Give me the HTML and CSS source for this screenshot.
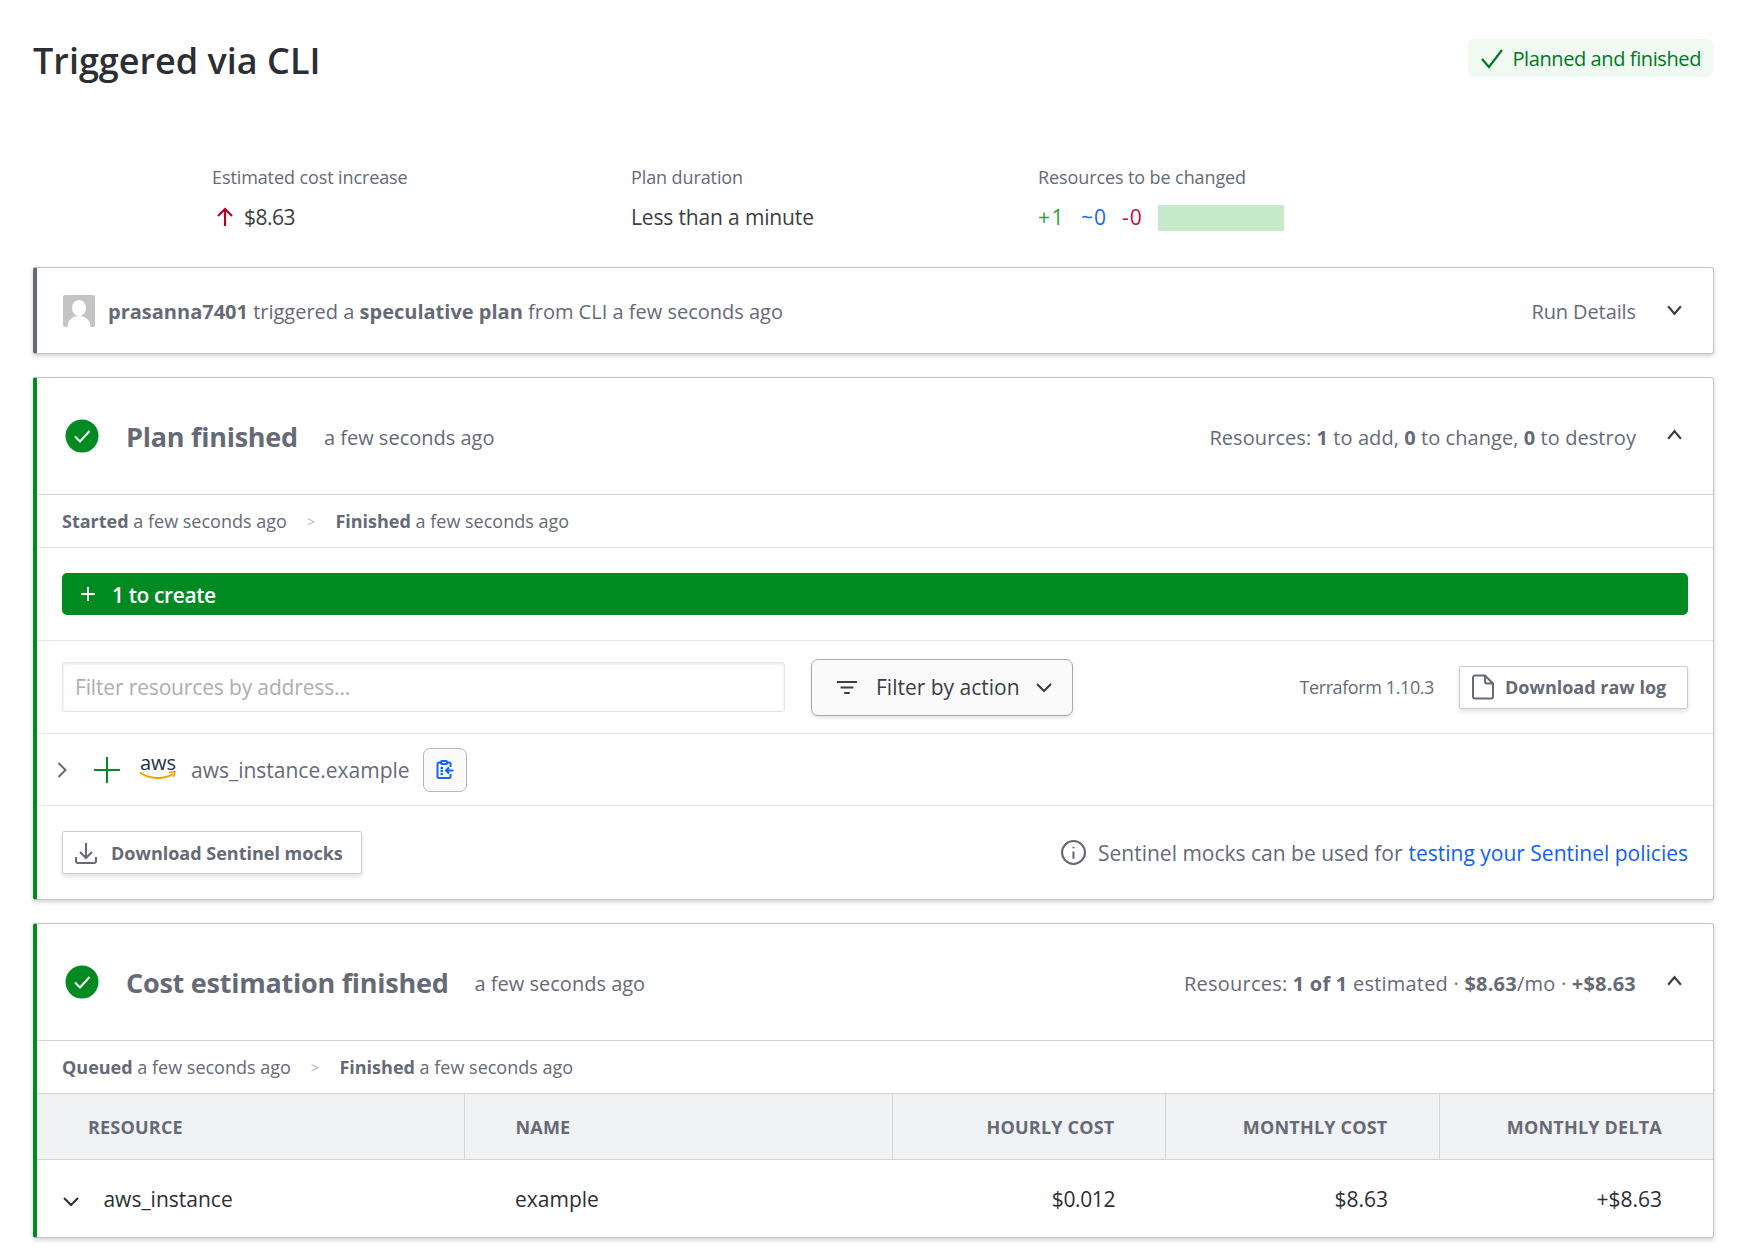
FILE: index.html
```html
<!DOCTYPE html>
<html lang="en">

<head>
    <meta charset="UTF-8">
    <meta name="viewport" content="width=device-width, initial-scale=1.0">
    <title>Triggered via CLI</title>
    <link rel="stylesheet" href="styles.css">
</head>

<body>
    <div class="page">
        <div class="pageHeader">
            <h1>Triggered via CLI</h1>
            <span class="statusBadge">
                <svg class="badgeIcon" viewBox="0 0 24 24"><path d="M2 13l7 8L22 4" /></svg>
                Planned and finished
            </span>
        </div>

        <div class="stats">
            <div>
                <div class="statLabel">Estimated cost increase</div>
                <div class="statValue costValue">
                    <svg class="upArrow" viewBox="0 0 20 20"><path d="M10 19V2M3 9l7-7 7 7" /></svg>
                    $8.63
                </div>
            </div>
            <div>
                <div class="statLabel">Plan duration</div>
                <div class="statValue">Less than a minute</div>
            </div>
            <div>
                <div class="statLabel">Resources to be changed</div>
                <div class="statValue">
                    <span class="addCount">+1</span>
                    <span class="changeCount">~0</span>
                    <span class="destroyCount">-0</span>
                    <span class="changeBar"></span>
                </div>
            </div>
        </div>

        <div class="card greyCard">
            <div class="runRow">
                <svg class="avatar" viewBox="0 0 32 32">
                    <rect width="32" height="32" rx="2" fill="#c4c4c4" />
                    <ellipse cx="16" cy="13" rx="7" ry="8" fill="#fff" />
                    <path d="M4.500 32c0-7 5-11 11.500-11s11.500 4 11.500 11z" fill="#fff" />
                </svg>
                <span class="runText"><b>prasanna7401</b> triggered a <b>speculative plan</b> from CLI a few seconds ago</span>
                <span class="rightLabel">Run Details</span>
                <svg class="chevron" viewBox="0 0 16 16"><path d="M2 5l6 7 6-7" /></svg>
            </div>
        </div>

        <div class="card greenCard">
            <div class="cardHeader">
                <svg class="checkCircle" viewBox="0 0 36 36">
                    <circle cx="18" cy="18" r="17.5" fill="#008a22" />
                    <path d="M11 18.5l5 5 9.500-10.500" />
                </svg>
                <h2>Plan finished</h2>
                <span class="timeAgo">a few seconds ago</span>
                <span class="rightLabel">Resources: <b>1</b> to add, <b>0</b> to change, <b>0</b> to destroy</span>
                <svg class="chevron" viewBox="0 0 16 16"><path d="M2 11l6-7 6 7" /></svg>
            </div>
            <div class="timeRow">
                <span><b>Started</b> a few seconds ago</span>
                <span class="timeSep">&gt;</span>
                <span><b>Finished</b> a few seconds ago</span>
            </div>
            <div class="barSection">
                <div class="createBar">
                    <svg class="createPlus" viewBox="0 0 16 16"><path d="M8 1v14M1 8h14" /></svg>
                    1 to create
                </div>
            </div>
            <div class="filterSection">
                <input class="filterInput" type="text" placeholder="Filter resources by address...">
                <button class="filterButton">
                    <svg class="filterIcon" viewBox="0 0 24 16"><path d="M1 2h22M5 8h14M9 14h6" /></svg>
                    Filter by action
                    <svg class="filterChevron" viewBox="0 0 16 16"><path d="M1 5l7 7 7-7" /></svg>
                </button>
                <span class="tfVersion">Terraform 1.10.3</span>
                <button class="plainButton rawLog">
                    <svg class="fileIcon" viewBox="0 0 24 26"><path d="M4 1.500h10l8 8v13a2 2 0 0 1-2 2H4a2 2 0 0 1-2-2v-19a2 2 0 0 1 2-2zM14 1.500v6a2 2 0 0 0 2 2h6" /></svg>
                    Download raw log
                </button>
            </div>
            <div class="resourceRow">
                <svg class="rowChevron" viewBox="0 0 10 16"><path d="M1 1l7 7-7 7" /></svg>
                <svg class="rowPlus" viewBox="0 0 26 26"><path d="M13 0v26M0 13h26" /></svg>
                <span class="awsLogo">
                    <span class="awsText">aws</span>
                    <svg class="awsSmile" viewBox="0 0 38 10">
                        <path class="smileCurve" d="M1 1.500c9 6.500 24 7.500 33 1.500" />
                        <path class="smileTip" d="M30 1.500l6-1-1.500 5.500" />
                    </svg>
                </span>
                <span class="resourceName">aws_instance.example</span>
                <button class="clipButton">
                    <svg class="clipIcon" viewBox="0 0 18 19">
                        <path d="M5 2.500H3A1.500 1.500 0 0 0 1.500 4v12.500A1.500 1.500 0 0 0 3 18h10a1.500 1.500 0 0 0 1.500-1.500V14M14.500 7V4A1.500 1.500 0 0 0 13 2.500h-2" />
                        <rect x="5" y="1" width="6" height="3" rx="1" />
                        <path d="M4.500 8h2.500M4.500 11h2.500M4.500 14h2.500M17.500 10.500H10M13 7.500l-3 3 3 3" />
                    </svg>
                </button>
            </div>
            <div class="mocksRow">
                <button class="plainButton">
                    <svg class="downloadIcon" viewBox="0 0 24 24"><path d="M12 2v14M6 11l6 6 6-6M2 16v4a2 2 0 0 0 2 2h16a2 2 0 0 0 2-2v-4" /></svg>
                    Download Sentinel mocks
                </button>
                <span class="mocksNote">
                    <svg class="infoIcon" viewBox="0 0 24 24">
                        <circle cx="12" cy="12" r="11" />
                        <path d="M12 11v7M12 6.500v1.500" />
                    </svg>
                    Sentinel mocks can be used for <a href="#">testing your Sentinel policies</a>
                </span>
            </div>
        </div>

        <div class="card greenCard lastCard">
            <div class="cardHeader">
                <svg class="checkCircle" viewBox="0 0 36 36">
                    <circle cx="18" cy="18" r="17.5" fill="#008a22" />
                    <path d="M11 18.5l5 5 9.500-10.500" />
                </svg>
                <h2>Cost estimation finished</h2>
                <span class="timeAgo">a few seconds ago</span>
                <span class="rightLabel costSummary">Resources: <b>1 of 1</b> estimated · <b>$8.63</b>/mo · <b>+$8.63</b></span>
                <svg class="chevron" viewBox="0 0 16 16"><path d="M2 11l6-7 6 7" /></svg>
            </div>
            <div class="timeRow costTimes">
                <span><b>Queued</b> a few seconds ago</span>
                <span class="timeSep">&gt;</span>
                <span><b>Finished</b> a few seconds ago</span>
            </div>
            <table class="costTable">
                <thead>
                    <tr>
                        <th class="resourceCol">RESOURCE</th>
                        <th class="nameCol">NAME</th>
                        <th class="hourlyCol">HOURLY COST</th>
                        <th class="monthlyCol">MONTHLY COST</th>
                        <th class="deltaCol">MONTHLY DELTA</th>
                    </tr>
                </thead>
                <tbody>
                    <tr>
                        <td class="resourceCell">
                            <svg class="tableChevron" viewBox="0 0 16 16"><path d="M1 5l7 7 7-7" /></svg>
                            aws_instance
                        </td>
                        <td class="nameCol">example</td>
                        <td class="hourlyCol">$0.012</td>
                        <td class="monthlyCol">$8.63</td>
                        <td class="deltaCol">+$8.63</td>
                    </tr>
                </tbody>
            </table>
        </div>
    </div>
</body>

</html>
```

FILE: styles.css
```css
* {
    box-sizing: border-box;
}

body {
    margin: 0;
    font-family: "Open Sans", "Noto Sans", sans-serif;
    color: #656a76;
    background-color: #fff;
}

svg {
    flex: none;
    fill: none;
    stroke: currentColor;
}

b {
    font-weight: 700;
}

.page {
    padding: 39px 29px 20px 33px;
}

.pageHeader {
    display: flex;
    justify-content: space-between;
    align-items: flex-start;
    height: 44px;
}

h1 {
    margin: 0;
    font-size: 36px;
    line-height: 44px;
    font-weight: 600;
    color: #2c2e35;
}

.statusBadge {
    display: flex;
    align-items: center;
    gap: 8px;
    height: 38px;
    margin-right: 1px;
    padding: 0 12px;
    border-radius: 6px;
    font-size: 20px;
    letter-spacing: -0.4px;
    color: #00781e;
    background-color: #f0f9f2;
}

.badgeIcon {
    width: 24px;
    height: 24px;
    stroke-width: 2.2;
}

.stats {
    display: grid;
    grid-template-columns: 419px 407px 1fr;
    margin: 83px 0 36px;
    padding-left: 179px;
}

.statLabel {
    margin-top: -1px;
    font-size: 18px;
    line-height: 24px;
    letter-spacing: -0.1px;
}

.statValue {
    display: flex;
    align-items: center;
    height: 26px;
    margin-top: 16px;
    padding-bottom: 2px;
    font-size: 21px;
    letter-spacing: -0.15px;
    color: #3b3d45;
}

.costValue {
    letter-spacing: -0.5px;
}

.upArrow {
    width: 20px;
    height: 20px;
    margin: 0 9px 0 3px;
    stroke: #b3001b;
    stroke-width: 2.2;
}

.addCount {
    letter-spacing: 1.5px;
    color: #2e9e41;
}

.changeCount {
    margin-left: 16px;
    letter-spacing: 1px;
    color: #1563ff;
}

.destroyCount {
    margin-left: 15px;
    letter-spacing: 1px;
    color: #c00f3c;
}

.changeBar {
    align-self: flex-start;
    width: 126px;
    height: 26px;
    margin-left: 15px;
    background-color: #c6e9c9;
}

.card {
    margin-bottom: 23px;
    border: 1px solid #c4c5c8;
    border-left-width: 4px;
    border-radius: 3px;
    box-shadow: 0 2px 4px rgba(60, 65, 75, 0.25);
    background-color: #fff;
}

.lastCard {
    margin-bottom: 0;
}

.greyCard {
    border-left-color: #656a76;
}

.greenCard {
    border-left-color: #008a22;
}

.runRow {
    display: flex;
    align-items: center;
    height: 85px;
    padding: 0 29px 0 26px;
    font-size: 20px;
}

.avatar {
    width: 32px;
    height: 32px;
    margin-right: 13px;
    stroke: none;
}

.runText {
    flex: 1;
    padding-top: 1px;
}

.rightLabel {
    margin-left: auto;
    padding-top: 2px;
    font-size: 20px;
    letter-spacing: 0.07px;
}

.runRow .rightLabel {
    letter-spacing: -0.1px;
}

.costSummary {
    letter-spacing: 0.22px;
}

.chevron {
    width: 17px;
    height: 17px;
    margin: -3px 1px 0 30px;
    stroke-width: 2;
    color: #3b3d45;
}

.cardHeader {
    display: flex;
    align-items: center;
    height: 117px;
    padding: 0 29px 0 27px;
    border-bottom: 1px solid #d3d4d7;
}

.cardHeader .chevron {
    margin-top: -1px;
}

.checkCircle {
    width: 36px;
    height: 36px;
    margin-right: 26px;
    stroke: #fff;
    stroke-width: 2;
}

h2 {
    margin: 2px 26px 0 0;
    font-size: 27px;
    line-height: 36px;
    font-weight: 700;
    letter-spacing: -0.25px;
}

.timeAgo {
    padding-top: 2px;
    font-size: 20px;
}

.timeRow {
    display: flex;
    align-items: center;
    height: 53px;
    padding-left: 25px;
    border-bottom: 1px solid #e3e4e6;
    font-size: 18px;
}

.costTimes {
    border-bottom-color: #d3d4d7;
}

.timeSep {
    margin: 0 20px;
    font-size: 15px;
    color: #b9bbc0;
}

.barSection {
    height: 93px;
    padding: 25px 25px 25px 25px;
    border-bottom: 1px solid #e3e4e6;
}

.createBar {
    display: flex;
    align-items: center;
    height: 42px;
    padding: 1px 0 0 18px;
    border-radius: 5px;
    font-size: 21px;
    font-weight: 600;
    letter-spacing: -0.4px;
    color: #fff;
    background-color: #008a22;
}

.createPlus {
    width: 16px;
    height: 16px;
    margin: -2px 16px 0 0;
    stroke-width: 2;
}

.filterSection {
    display: flex;
    align-items: center;
    height: 93px;
    padding: 0 25px 0 25px;
    border-bottom: 1px solid #e3e4e6;
}

.filterInput {
    width: 723px;
    height: 50px;
    padding: 0 12px;
    border: 1px solid #e3e4e6;
    border-radius: 3px;
    font-family: inherit;
    font-size: 21px;
    letter-spacing: -0.15px;
    box-shadow: inset 0 1px 3px rgba(60, 65, 75, 0.12);
}

.filterInput::placeholder {
    color: #acaeb3;
}

.filterButton {
    display: flex;
    align-items: center;
    width: 262px;
    height: 57px;
    margin-left: 26px;
    padding: 0 0 0 24px;
    border: 1px solid #a9abb0;
    border-radius: 7px;
    font-family: inherit;
    font-size: 21px;
    color: #3b3d45;
    background-color: #fafafa;
    box-shadow: 0 2px 3px rgba(60, 65, 75, 0.15);
}

.filterIcon {
    width: 22px;
    height: 15px;
    margin-right: 18px;
    stroke-width: 2;
}

.filterChevron {
    width: 16px;
    height: 16px;
    margin-left: 16px;
    stroke-width: 2;
}

.tfVersion {
    margin-left: auto;
    font-size: 18px;
    letter-spacing: -0.4px;
}

.plainButton {
    display: flex;
    align-items: center;
    height: 43px;
    padding: 0 0 0 11px;
    border: 1px solid #c9cacd;
    border-radius: 2px;
    font-family: inherit;
    font-size: 18px;
    font-weight: 700;
    color: #656a76;
    background-color: #fff;
    box-shadow: 0 3px 4px rgba(60, 65, 75, 0.15);
}

.rawLog {
    width: 229px;
    margin-left: 25px;
}

.fileIcon {
    width: 24px;
    height: 26px;
    margin-right: 10px;
    stroke-width: 2;
}

.resourceRow {
    display: flex;
    align-items: center;
    height: 72px;
    padding-left: 20px;
    border-bottom: 1px solid #e3e4e6;
}

.rowChevron {
    width: 11px;
    height: 16px;
    margin-right: 26px;
    stroke-width: 2;
}

.rowPlus {
    width: 26px;
    height: 26px;
    margin-right: 19px;
    stroke: #008a22;
    stroke-width: 2;
}

.awsLogo {
    display: flex;
    flex-direction: column;
    align-items: center;
    width: 38px;
    margin: -4px 14px 0 0;
}

.awsText {
    font-size: 20px;
    font-weight: 500;
    line-height: 15px;
    color: #232f3e;
}

.awsSmile {
    width: 38px;
    height: 10px;
    margin-top: 1px;
}

.smileCurve {
    stroke: #f90;
    stroke-width: 2;
}

.smileTip {
    stroke: #f90;
    stroke-width: 1.5;
}

.resourceName {
    font-size: 21px;
}

.clipButton {
    display: flex;
    align-items: center;
    justify-content: center;
    width: 44px;
    height: 44px;
    margin-left: 13px;
    padding: 0;
    border: 1px solid #b5b7bc;
    border-radius: 7px;
    color: #1563ff;
    background-color: #fafafa;
}

.clipIcon {
    width: 18px;
    height: 19px;
    stroke-width: 2;
}

.mocksRow {
    display: flex;
    align-items: center;
    justify-content: space-between;
    height: 93px;
    padding: 0 25px 0 25px;
}

.downloadIcon {
    width: 24px;
    height: 24px;
    margin-right: 13px;
    stroke-width: 2;
}

.mocksRow .plainButton {
    width: 300px;
}

.mocksNote {
    display: flex;
    align-items: center;
    font-size: 21px;
}

.infoIcon {
    width: 25px;
    height: 25px;
    margin-right: 12px;
    stroke-width: 2;
}

.mocksNote a {
    margin-left: 6px;
    color: #1060ff;
    text-decoration: none;
}

.costTable {
    width: 100%;
    border-collapse: collapse;
    table-layout: fixed;
}

th {
    height: 65px;
    padding: 2px 23px 0;
    border-left: 1px solid #d3d4d7;
    border-bottom: 1px solid #d3d4d7;
    font-size: 18px;
    font-weight: 700;
    letter-spacing: 0.2px;
    text-align: left;
    background-color: #f1f2f3;
}

th:first-child {
    border-left: none;
}

td {
    height: 78px;
    padding: 2px 23px 0;
    font-size: 21px;
    font-weight: 500;
    color: #2c2e35;
}

.resourceCol {
    width: 427px;
    padding-left: 51px;
}

.resourceCell {
    padding-left: 26px;
}

.tableChevron {
    width: 16px;
    height: 16px;
    margin-right: 19px;
    stroke-width: 2;
    vertical-align: -2px;
}

.nameCol {
    width: 428px;
    padding-left: 51px;
}

.hourlyCol {
    width: 273px;
    padding-right: 50px;
    text-align: right;
}

td.hourlyCol {
    letter-spacing: -0.4px;
}

.monthlyCol {
    width: 274px;
    padding-right: 51px;
    text-align: right;
}

.deltaCol {
    padding-right: 51px;
    text-align: right;
}
```
